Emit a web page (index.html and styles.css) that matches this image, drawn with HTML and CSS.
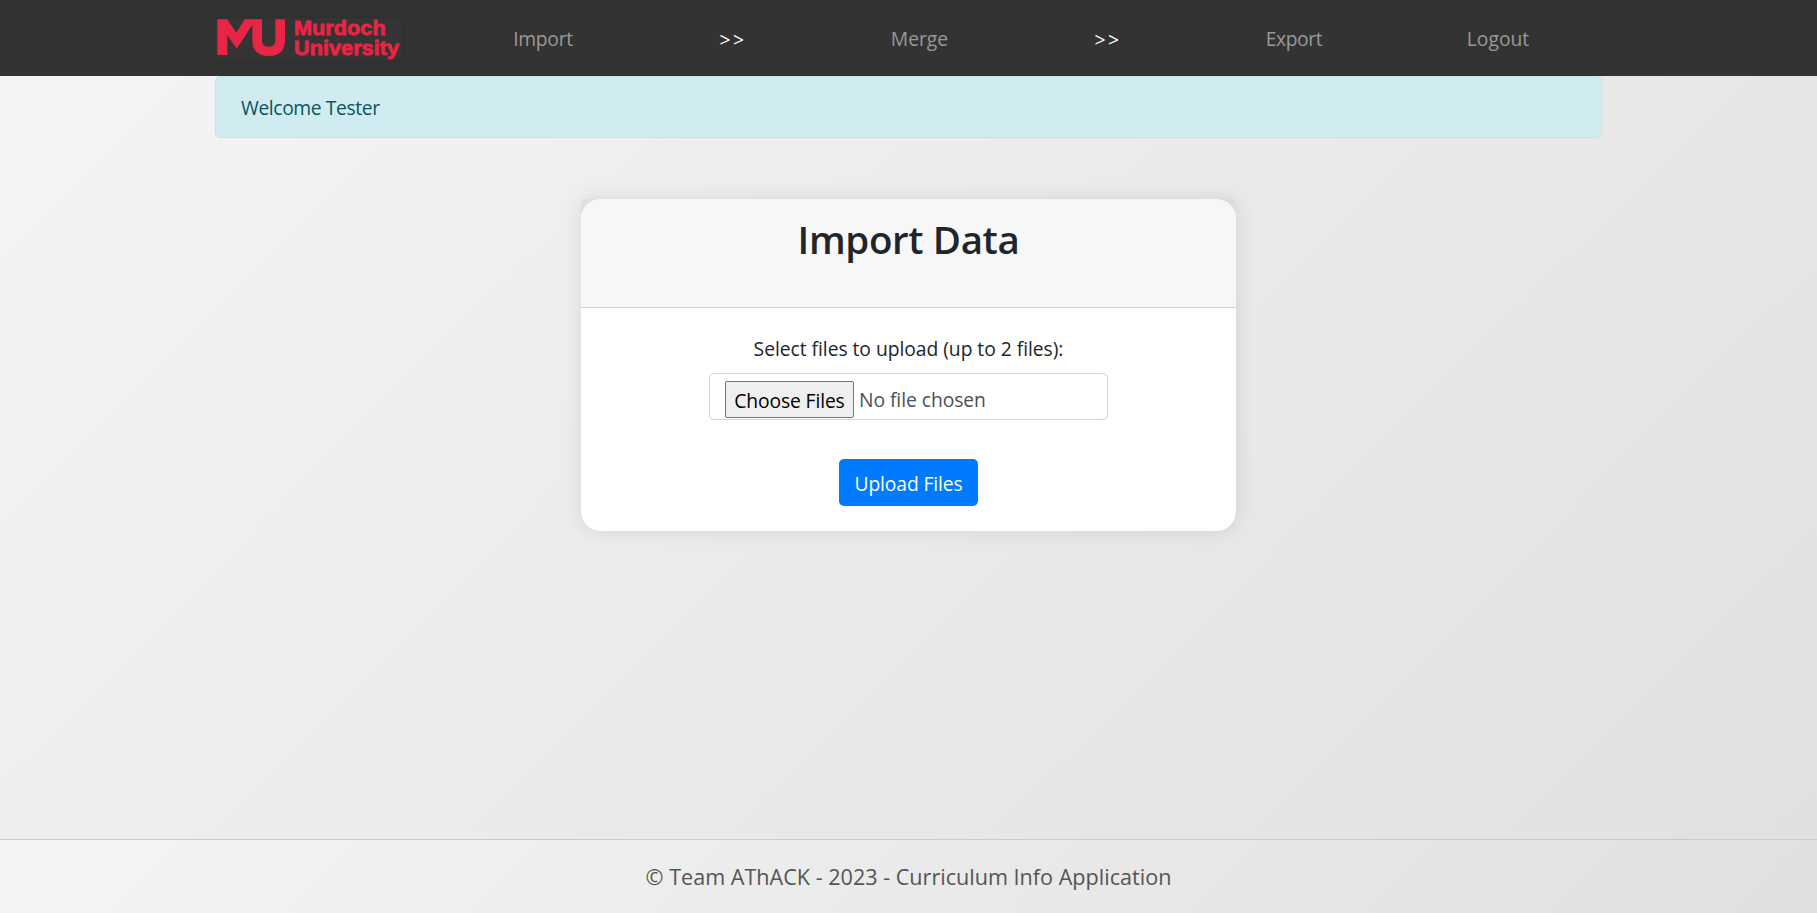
FILE: index.html
```
<!DOCTYPE html>
<html lang="en">
<head>
<meta charset="utf-8">
<title>Import Data</title>
<link rel="stylesheet" href="styles.css">
</head>
<body>
<header class="navbar">
  <nav class="navbar-inner">
    <a class="brand">
      <svg class="logo" viewBox="45 54 561 126" role="img" aria-label="Murdoch University">
        <path d="M52 58H82L109 98L134 58H186V123Q186 140 206 140Q226 140 226 123V58H255V120Q255 168 206 168Q157 168 157 120V75L110 146L82 105V165H52Z"/>
        <text x="282" y="104" textLength="275" lengthAdjust="spacingAndGlyphs">Murdoch</text>
        <text x="282" y="165" textLength="315" lengthAdjust="spacingAndGlyphs">University</text>
      </svg>
    </a>
    <a class="nav-link tight">Import</a>
    <span class="nav-step">&gt;&gt;</span>
    <a class="nav-link">Merge</a>
    <span class="nav-step">&gt;&gt;</span>
    <a class="nav-link tighter">Export</a>
    <a class="nav-link">Logout</a>
  </nav>
</header>
<main class="container">
  <div class="alert">Welcome Tester</div>
  <section class="card-frame">
    <div class="card">
      <div class="card-header"><h1 class="title">Import Data</h1></div>
      <div class="card-body">
        <label class="label">Select files to upload (up to 2 files):</label>
        <div class="file-input">
          <button class="file-button" type="button">Choose Files</button>
          <span class="file-status">No file chosen</span>
        </div>
        <button class="submit" type="button">Upload Files</button>
      </div>
    </div>
  </section>
</main>
<footer class="footer">© Team AThACK - 2023 - Curriculum Info Application</footer>
</body>
</html>
```
FILE: styles.css
```
* { box-sizing: border-box; }

body {
  margin: 0;
  height: 100vh;
  display: flex;
  flex-direction: column;
  overflow: hidden;
  font-family: "Open Sans", "Noto Sans", sans-serif;
  font-size: 19.3px;
  line-height: 30px;
  color: #212529;
  background: linear-gradient(135deg, #f5f5f5, #e0e0e0);
}

.navbar {
  height: 76px;
  flex: none;
  background: #333;
}

.navbar-inner {
  width: 1387px;
  height: 100%;
  margin: 0 auto;
  display: grid;
  grid-template-columns: 233px 190px 188px 187px 188px 186px 222px;
  align-items: center;
  text-align: center;
}

.brand { display: flex; padding-top: 2px; }

.logo {
  width: 187px;
  height: 42px;
  background: #343434;
  box-shadow: 0 0 10px rgba(0, 0, 0, 0.1);
  fill: #e62644;
  overflow: visible;
}

.logo text {
  font: 700 63px "Liberation Sans", Arial, sans-serif;
  stroke: #e62644;
  stroke-width: 2.5px;
}

.nav-link { color: #999; padding-top: 2px; }
.tight { letter-spacing: -0.3px; }
.tighter { letter-spacing: -0.4px; }
.nav-step { color: #fff; letter-spacing: 2.4px; padding: 3px 0 0 2px; }

.container {
  width: 1387px;
  margin: 0 auto;
  flex: 1;
}

.alert {
  height: 62px;
  padding: 16px 25px;
  border: 1px solid #bee5eb;
  border-radius: 5px;
  background: #d1ecf1;
  color: #0c5460;
  letter-spacing: -0.4px;
}

.card-frame {
  width: 655px;
  margin: 61px auto 0;
  border-radius: 5px 5px 20px 20px;
  background: rgba(0, 0, 0, 0.06);
  box-shadow: 0 0 20px rgba(0, 0, 0, 0.1);
}

.card {
  height: 332px;
  border-radius: 20px;
  overflow: hidden;
  background: #fff;
}

.card-header {
  height: 109px;
  padding-top: 16px;
  background: #f7f7f7;
  border-bottom: 1px solid #d3d3d3;
  text-align: center;
}

.title {
  margin: 0;
  font-size: 38.5px;
  font-weight: 600;
  line-height: 48px;
  letter-spacing: -0.36px;
}

.card-body {
  display: flex;
  flex-direction: column;
  align-items: center;
  padding-top: 26px;
}

.label { height: 39px; letter-spacing: -0.04px; }

.file-input {
  width: 399px;
  height: 47px;
  padding: 7px 15px 0;
  display: flex;
  align-items: flex-start;
  gap: 5px;
  border: 1px solid #ced4da;
  border-radius: 5px;
  background: #fff;
}

.file-button {
  width: 129px;
  height: 37px;
  padding: 3px 0 0;
  border: 1px solid #767676;
  border-radius: 2px;
  background: #efefef;
  color: #000;
  font: inherit;
  letter-spacing: -0.13px;
}

.file-status { color: #495057; padding-top: 4px; letter-spacing: -0.06px; }

.submit {
  width: 139px;
  height: 47px;
  margin-top: 39px;
  padding: 3px 0 0;
  border: 0;
  border-radius: 5px;
  background: #007bff;
  color: #fff;
  font: inherit;
  letter-spacing: -0.13px;
}

.footer {
  height: 74px;
  flex: none;
  padding-top: 22px;
  border-top: 1px solid #ccc;
  background: linear-gradient(135deg, #f5f5f5, #e0e0e0);
  color: #555;
  font-size: 21.6px;
  text-align: center;
}
```
